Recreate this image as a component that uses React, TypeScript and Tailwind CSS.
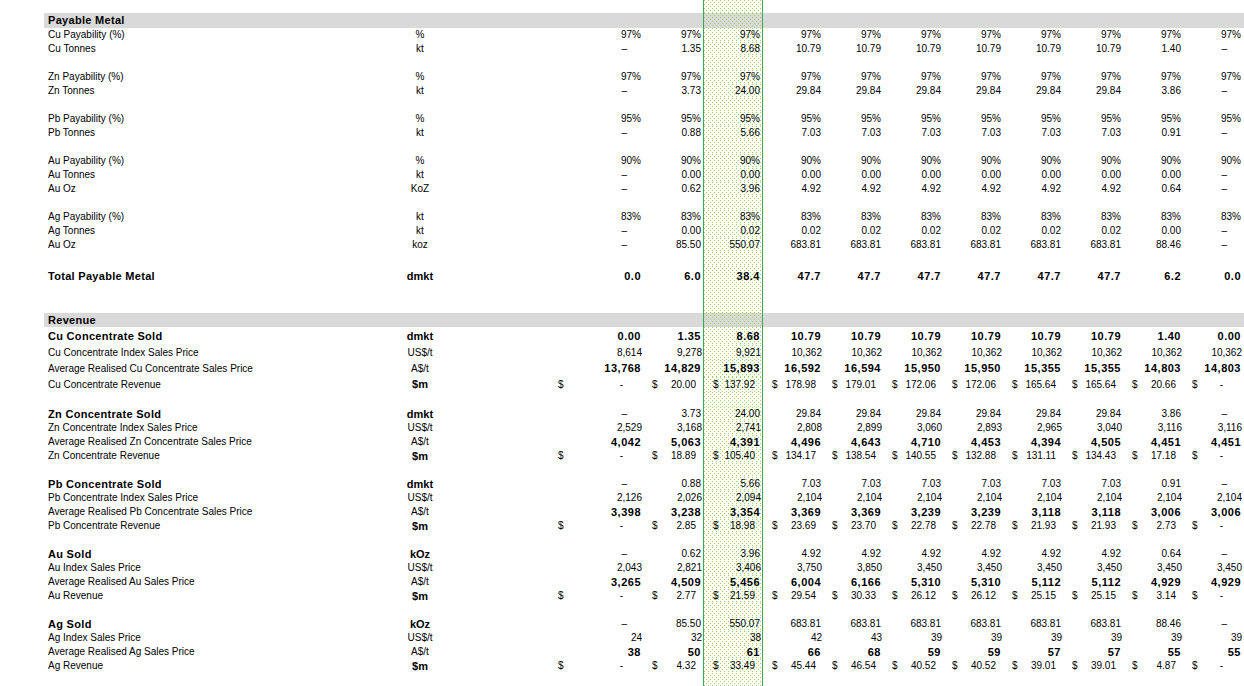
import React from "react";

type Kind = "num" | "idx" | "money";

type RowDef = {
  h?: string;
  band?: boolean;
  label?: string;
  labelBold?: boolean;
  unit?: string;
  unitBold?: boolean;
  valBold?: boolean;
  kind?: Kind;
  vals?: string[];
};

const D = "–"; // dash used in the payable block
const rep = (v: string, n: number) => Array.from({ length: n }, () => v);

const rows: RowDef[] = [
  { h: "h-[13px]" },
  { h: "h-[15px]", band: true, label: "Payable Metal" },
  { label: "Cu Payability (%)", unit: "%", vals: rep("97%", 11) },
  { label: "Cu Tonnes", unit: "kt", vals: [D, "1.35", "8.68", ...rep("10.79", 6), "1.40", D] },
  {},
  { label: "Zn Payability (%)", unit: "%", vals: rep("97%", 11) },
  { label: "Zn Tonnes", unit: "kt", vals: [D, "3.73", "24.00", ...rep("29.84", 6), "3.86", D] },
  {},
  { label: "Pb Payability (%)", unit: "%", vals: rep("95%", 11) },
  { label: "Pb Tonnes", unit: "kt", vals: [D, "0.88", "5.66", ...rep("7.03", 6), "0.91", D] },
  {},
  { label: "Au Payability (%)", unit: "%", vals: rep("90%", 11) },
  { label: "Au Tonnes", unit: "kt", vals: [D, "0.00", "0.00", ...rep("0.00", 6), "0.00", D] },
  { label: "Au Oz", unit: "KoZ", vals: [D, "0.62", "3.96", ...rep("4.92", 6), "0.64", D] },
  {},
  { label: "Ag Payability (%)", unit: "kt", vals: rep("83%", 11) },
  { label: "Ag Tonnes", unit: "kt", vals: [D, "0.00", "0.02", ...rep("0.02", 6), "0.00", D] },
  { label: "Au Oz", unit: "koz", vals: [D, "85.50", "550.07", ...rep("683.81", 6), "88.46", D] },
  {},
  {
    h: "h-[20px]",
    label: "Total Payable Metal",
    labelBold: true,
    unit: "dmkt",
    unitBold: true,
    valBold: true,
    vals: ["0.0", "6.0", "38.4", ...rep("47.7", 6), "6.2", "0.0"],
  },
  { h: "h-[27px]" },
  { h: "h-[14px]", band: true, label: "Revenue" },

  // Cu
  {
    h: "h-[18px]",
    label: "Cu Concentrate Sold",
    labelBold: true,
    unit: "dmkt",
    unitBold: true,
    valBold: true,
    vals: ["0.00", "1.35", "8.68", ...rep("10.79", 6), "1.40", "0.00"],
  },
  {
    h: "h-[15px]",
    label: "Cu Concentrate Index Sales Price",
    unit: "US$/t",
    kind: "idx",
    vals: ["8,614", "9,278", "9,921", ...rep("10,362", 8)],
  },
  {
    h: "h-[17px]",
    label: "Average Realised Cu Concentrate Sales Price",
    unit: "A$/t",
    valBold: true,
    vals: ["13,768", "14,829", "15,893", "16,592", "16,594", "15,950", "15,950", "15,355", "15,355", "14,803", "14,803"],
  },
  {
    h: "h-[15px]",
    label: "Cu Concentrate Revenue",
    unit: "$m",
    unitBold: true,
    kind: "money",
    vals: ["-", "20.00", "137.92", "178.98", "179.01", "172.06", "172.06", "165.64", "165.64", "20.66", "-"],
  },
  { h: "h-[15px]" },

  // Zn
  {
    label: "Zn Concentrate Sold",
    labelBold: true,
    unit: "dmkt",
    unitBold: true,
    vals: [D, "3.73", "24.00", ...rep("29.84", 6), "3.86", D],
  },
  {
    label: "Zn Concentrate Index Sales Price",
    unit: "US$/t",
    kind: "idx",
    vals: ["2,529", "3,168", "2,741", "2,808", "2,899", "3,060", "2,893", "2,965", "3,040", "3,116", "3,116"],
  },
  {
    label: "Average Realised Zn Concentrate Sales Price",
    unit: "A$/t",
    valBold: true,
    vals: ["4,042", "5,063", "4,391", "4,496", "4,643", "4,710", "4,453", "4,394", "4,505", "4,451", "4,451"],
  },
  {
    label: "Zn Concentrate Revenue",
    unit: "$m",
    unitBold: true,
    kind: "money",
    vals: ["-", "18.89", "105.40", "134.17", "138.54", "140.55", "132.88", "131.11", "134.43", "17.18", "-"],
  },
  {},

  // Pb
  {
    label: "Pb Concentrate Sold",
    labelBold: true,
    unit: "dmkt",
    unitBold: true,
    vals: [D, "0.88", "5.66", ...rep("7.03", 6), "0.91", D],
  },
  {
    label: "Pb Concentrate Index Sales Price",
    unit: "US$/t",
    kind: "idx",
    vals: ["2,126", "2,026", "2,094", ...rep("2,104", 8)],
  },
  {
    label: "Average Realised Pb Concentrate Sales Price",
    unit: "A$/t",
    valBold: true,
    vals: ["3,398", "3,238", "3,354", "3,369", "3,369", "3,239", "3,239", "3,118", "3,118", "3,006", "3,006"],
  },
  {
    label: "Pb Concentrate Revenue",
    unit: "$m",
    unitBold: true,
    kind: "money",
    vals: ["-", "2.85", "18.98", "23.69", "23.70", "22.78", "22.78", "21.93", "21.93", "2.73", "-"],
  },
  {},

  // Au
  {
    label: "Au Sold",
    labelBold: true,
    unit: "kOz",
    unitBold: true,
    vals: [D, "0.62", "3.96", ...rep("4.92", 6), "0.64", D],
  },
  {
    label: "Au Index Sales Price",
    unit: "US$/t",
    kind: "idx",
    vals: ["2,043", "2,821", "3,406", "3,750", "3,850", ...rep("3,450", 6)],
  },
  {
    label: "Average Realised Au Sales Price",
    unit: "A$/t",
    valBold: true,
    vals: ["3,265", "4,509", "5,456", "6,004", "6,166", "5,310", "5,310", "5,112", "5,112", "4,929", "4,929"],
  },
  {
    label: "Au Revenue",
    unit: "$m",
    unitBold: true,
    kind: "money",
    vals: ["-", "2.77", "21.59", "29.54", "30.33", "26.12", "26.12", "25.15", "25.15", "3.14", "-"],
  },
  {},

  // Ag
  {
    label: "Ag Sold",
    labelBold: true,
    unit: "kOz",
    unitBold: true,
    vals: [D, "85.50", "550.07", ...rep("683.81", 6), "88.46", D],
  },
  {
    label: "Ag Index Sales Price",
    unit: "US$/t",
    kind: "idx",
    vals: ["24", "32", "38", "42", "43", ...rep("39", 6)],
  },
  {
    label: "Average Realised Ag Sales Price",
    unit: "A$/t",
    valBold: true,
    vals: ["38", "50", "61", "66", "68", "59", "59", "57", "57", "55", "55"],
  },
  {
    label: "Ag Revenue",
    unit: "$m",
    unitBold: true,
    kind: "money",
    vals: ["-", "4.32", "33.49", "45.44", "46.54", "40.52", "40.52", "39.01", "39.01", "4.87", "-"],
  },
  { h: "h-[13px]" },
];

// Excel's 12.5% dotted fill for the selected period column
function DotFill() {
  return (
    <svg className="absolute inset-0 h-full w-full" aria-hidden shapeRendering="crispEdges">
      <rect width="100%" height="100%" fill="url(#hl-dots)" />
    </svg>
  );
}

function ValueCell({ row, v, i }: { row: RowDef; v?: string; i: number }) {
  const width = i === 0 ? "w-[94px]" : "w-[60px]";
  const hl = i === 2;
  const base = `${width} ${hl ? "relative border-x border-[#3aa85a]" : ""} h-full shrink-0 flex items-center`;

  if (v === undefined) return <div className={base}>{hl && <DotFill />}</div>;

  if (row.kind === "money") {
    return (
      <div className={`${base} justify-between`}>
        {hl && <DotFill />}
        <span className="relative pl-[9px]">$</span>
        <span className={`relative ${v === "-" ? "pr-[20px]" : "pr-[7px]"}`}>{v}</span>
      </div>
    );
  }

  const pad = v === D ? "pr-[16px]" : row.kind === "idx" ? "pr-[1px]" : "pr-[2px]";
  const weight = row.valBold ? "font-bold text-[11px] tracking-[0.5px]" : "";
  return (
    <div className={`${base} justify-end ${pad} ${weight}`}>
      {hl && <DotFill />}
      <span className="relative">{v}</span>
    </div>
  );
}

function Row({ row }: { row: RowDef }) {
  const h = row.h ?? "h-[14px]";
  const cells = Array.from({ length: 11 }, (_, i) => row.vals?.[i]);
  return (
    <div className={`flex ${h}`}>
      <div className="w-[44px] shrink-0" />
      <div className={`flex flex-1 h-full ${row.band ? "bg-[#d9d9d9]" : ""}`}>
        <div
          className={`w-[346px] shrink-0 h-full flex items-center pl-[4px] whitespace-nowrap ${
            row.band || row.labelBold ? "font-bold text-[11px] tracking-[0.3px]" : ""
          }`}
        >
          {row.label}
        </div>
        <div
          className={`w-[60px] shrink-0 h-full flex items-center justify-center ${
            row.unitBold ? "font-bold text-[11px]" : ""
          }`}
        >
          {row.unit}
        </div>
        <div className="w-[99px] shrink-0" />
        {cells.map((v, i) => (
          <ValueCell key={i} row={row} v={v} i={i} />
        ))}
      </div>
    </div>
  );
}

export default function App() {
  return (
    <div className="w-[1244px] h-[686px] overflow-hidden bg-white text-black text-[10px] font-['Liberation_Sans',Arial,sans-serif] leading-none">
      <svg className="absolute h-0 w-0" aria-hidden>
        <defs>
          <pattern id="hl-dots" width="4" height="4" patternUnits="userSpaceOnUse">
            <rect x="0" y="0" width="1" height="1" fill="#9ed25a" />
            <rect x="2" y="2" width="1" height="1" fill="#9ed25a" />
          </pattern>
        </defs>
      </svg>
      {rows.map((r, i) => (
        <Row key={i} row={r} />
      ))}
    </div>
  );
}
